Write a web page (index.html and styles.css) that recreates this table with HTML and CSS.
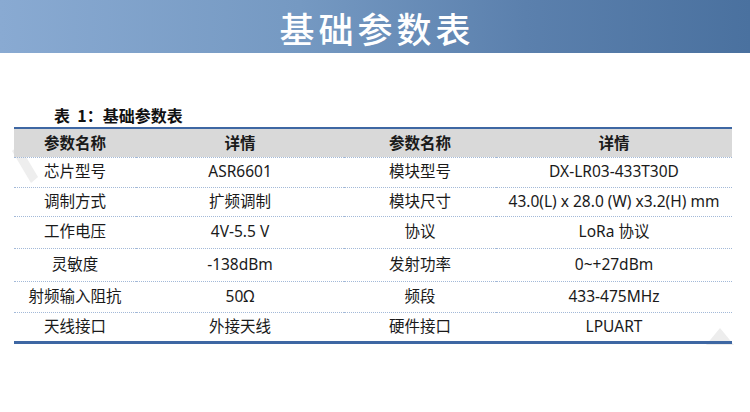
FILE: index.html
```html
<!DOCTYPE html>
<html lang="zh-CN">
<head>
<meta charset="utf-8">
<title>基础参数表</title>
<link rel="stylesheet" href="styles.css">
</head>
<body>
<header class="banner"><h1>基础参数表</h1></header>
<main class="content">
  <p class="caption">表&nbsp;&nbsp;1：基础参数表</p>
  <table class="params">
    <colgroup><col class="c1"><col class="c2"><col class="c3"><col class="c4"></colgroup>
    <thead>
      <tr class="r-head"><th>参数名称</th><th>详情</th><th>参数名称</th><th>详情</th></tr>
    </thead>
    <tbody>
      <tr class="r1"><td>芯片型号</td><td>ASR6601</td><td>模块型号</td><td>DX-LR03-433T30D</td></tr>
      <tr class="r2"><td>调制方式</td><td>扩频调制</td><td>模块尺寸</td><td>43.0(L) x 28.0 (W) x3.2(H) mm</td></tr>
      <tr class="r3"><td>工作电压</td><td>4V-5.5 V</td><td>协议</td><td>LoRa 协议</td></tr>
      <tr class="r4"><td>灵敏度</td><td>-138dBm</td><td>发射功率</td><td>0~+27dBm</td></tr>
      <tr class="r5"><td>射频输入阻抗</td><td>50Ω</td><td>频段</td><td>433-475MHz</td></tr>
      <tr class="r6"><td>天线接口</td><td>外接天线</td><td>硬件接口</td><td>LPUART</td></tr>
    </tbody>
  </table>
  <svg class="wm wm-left" width="30" height="40" viewBox="0 0 30 40"><path d="M2 6 L9 0 L28 32 L21 38 Z" fill="#eeeeee"/></svg>
  <svg class="wm wm-right" width="34" height="18" viewBox="0 0 34 18"><path d="M2 18 L16 1 L30 18 Z" fill="#ededed"/></svg>
</main>
</body>
</html>
```
FILE: styles.css
```css
html, body {
  margin: 0;
  padding: 0;
  background: #ffffff;
}
body {
  font-family: "Noto Sans", "Noto Sans CJK SC", sans-serif;
  color: #1a1a1a;
  width: 750px;
  height: 412px;
  overflow: hidden;
}
.banner {
  height: 53px;
  background: linear-gradient(90deg, #89aad2 0%, #7599c2 40%, #5b80ad 70%, #4a719f 100%);
  display: flex;
  align-items: center;
  justify-content: center;
}
.banner h1 {
  margin: 0;
  color: #ffffff;
  font-family: "Noto Sans CJK SC", sans-serif;
  font-weight: 500;
  font-size: 35px;
  letter-spacing: 4px;
  line-height: 1;
  padding: 2px 0 0 4px;
}
.content {
  position: relative;
  z-index: 0;
  padding: 0 0 0 14px;
}
.caption {
  margin: 0;
  padding: 50px 0 0 40px;
  height: 24px;
  font-family: "Noto Sans CJK SC", sans-serif;
  font-weight: 700;
  font-size: 16px;
  line-height: 24px;
  color: #111;
}
.params {
  width: 718px;
  border-collapse: collapse;
  table-layout: fixed;
  border-top: 2px solid #3e67a3;
  border-bottom: 3px solid #3e67a3;
  font-size: 15.5px;
}
.c1 { width: 122px; }
.c2 { width: 208px; }
.c3 { width: 152px; }
.c4 { width: 236px; }
.params th, .params td {
  padding: 0;
  text-align: center;
  vertical-align: middle;
  white-space: nowrap;
  border-bottom: 1px dotted #a3b9d8;
  line-height: 1;
}
.params th {
  background: #d9d9d9;
  font-family: "Noto Sans CJK SC", sans-serif;
  font-weight: 700;
  font-size: 15.5px;
}
.params tbody tr:last-child td { border-bottom: none; }
.r-head { height: 29px; }
.r1 { height: 30px; }
.r2 { height: 29px; }
.r3 { height: 32px; }
.r4 { height: 33px; }
.r5 { height: 31px; }
.r6 { height: 30px; }
.wm {
  position: absolute;
  z-index: -1;
}
.wm-left { left: 10px; top: 92px; }
.wm-right { left: 704px; top: 274px; }
```
